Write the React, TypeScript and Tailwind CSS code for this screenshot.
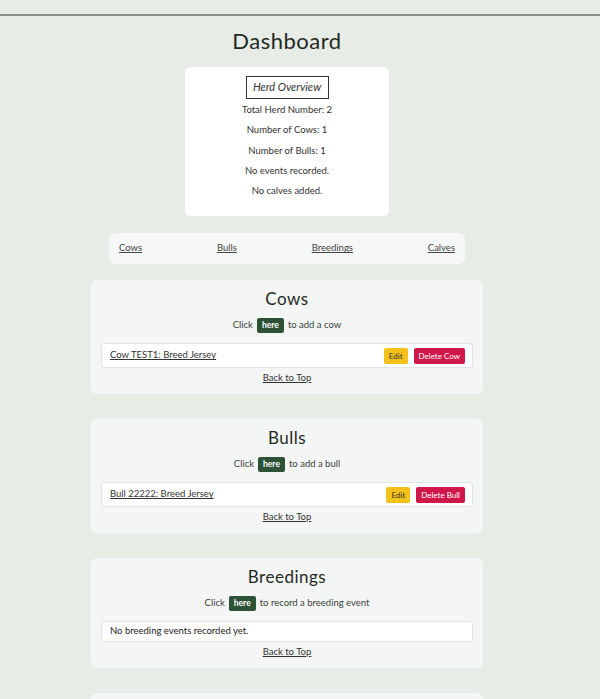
import React from 'react';

type Item = { label: string; del?: string };

function Section({ title, action, items, empty }: { title: string; action: string; items: Item[]; empty?: string }) {
  return (
    <section className="w-[392px] mx-auto bg-[#f4f6f5] rounded-md pt-[8px] pb-[10px] px-[10px] flex flex-col items-center">
      <h2 className="text-[17px] leading-[22px] text-[#1f2a22] tracking-[0.5px]">{title}</h2>
      <p className="mt-[8px] h-[15px] flex items-center gap-[4px] text-[9.5px] text-[#3a3f3b]">
        Click
        <span className="bg-[#2d5236] text-white font-bold text-[8.5px] h-[15px] px-[5px] rounded-[2px] flex items-center">here</span>
        {action}
      </p>
      {items.length === 0 ? (
        <div className="mt-[10px] w-full h-[21px] bg-white border border-[#e1e5e2] rounded-[3px] flex items-center pl-[8px]">
          <span className="text-[9.5px] text-[#222]">{empty}</span>
        </div>
      ) : (
        items.map((it) => (
          <div key={it.label} className="mt-[10px] w-full h-[25px] bg-white border border-[#e1e5e2] rounded-[3px] flex items-center justify-between pl-[8px] pr-[7px]">
            <a href="#" className="underline text-[9.5px] text-[#333]">{it.label}</a>
            <div className="flex gap-[6px]">
              <button className="bg-[#f3c11a] text-[#333] text-[8px] h-[16px] px-[5px] rounded-[2px]">Edit</button>
              <button className="bg-[#d0174a] text-white text-[8px] h-[16px] px-[5px] rounded-[2px]">{it.del}</button>
            </div>
          </div>
        ))
      )}
      <a href="#" className="mt-[4px] leading-[12px] underline text-[9.5px] text-[#333]">Back to Top</a>
    </section>
  );
}

export default function App() {
  return (
    <div className="min-h-screen bg-[#e7ece7] font-['Lato',sans-serif] text-[#333] pt-[14px]">
      <div className="border-t-2 border-[#8a938b]" />
      <main className="w-[574px]">
        <h1 className="mt-[10px] text-center text-[22px] leading-[30px] text-[#1f2a22] tracking-[0.5px]">Dashboard</h1>

        <div className="mt-[11px] w-[204px] h-[149px] mx-auto bg-white rounded-md pt-[9px] flex flex-col items-center">
          <div className="border border-[#333] h-[23px] w-[83px] flex items-center justify-center italic text-[11px] text-[#333]">Herd Overview</div>
          <div className="mt-[5px] flex flex-col items-center gap-[8.3px] text-[9.5px] leading-[12px] text-[#333]">
            <p>Total Herd Number: 2</p>
            <p>Number of Cows: 1</p>
            <p>Number of Bulls: 1</p>
            <p>No events recorded.</p>
            <p>No calves added.</p>
          </div>
        </div>

        <nav className="mt-[17px] w-[356px] h-[31px] mx-auto bg-[#f6f7f7] rounded-md flex items-center justify-between px-[10px] text-[9.5px]">
          <a href="#" className="underline text-[#444]">Cows</a>
          <a href="#" className="underline text-[#444]">Bulls</a>
          <a href="#" className="underline text-[#444]">Breedings</a>
          <a href="#" className="underline text-[#444]">Calves</a>
        </nav>

        <div className="mt-[16px] flex flex-col gap-[25px] pb-[20px]">
          <Section title="Cows" action="to add a cow" items={[{ label: 'Cow TEST1: Breed Jersey', del: 'Delete Cow' }]} />
          <Section title="Bulls" action="to add a bull" items={[{ label: 'Bull 22222: Breed Jersey', del: 'Delete Bull' }]} />
          <Section title="Breedings" action="to record a breeding event" items={[]} empty="No breeding events recorded yet." />
          <Section title="Calves" action="to add a calf" items={[]} empty="No calves added yet." />
        </div>
      </main>
    </div>
  );
}
